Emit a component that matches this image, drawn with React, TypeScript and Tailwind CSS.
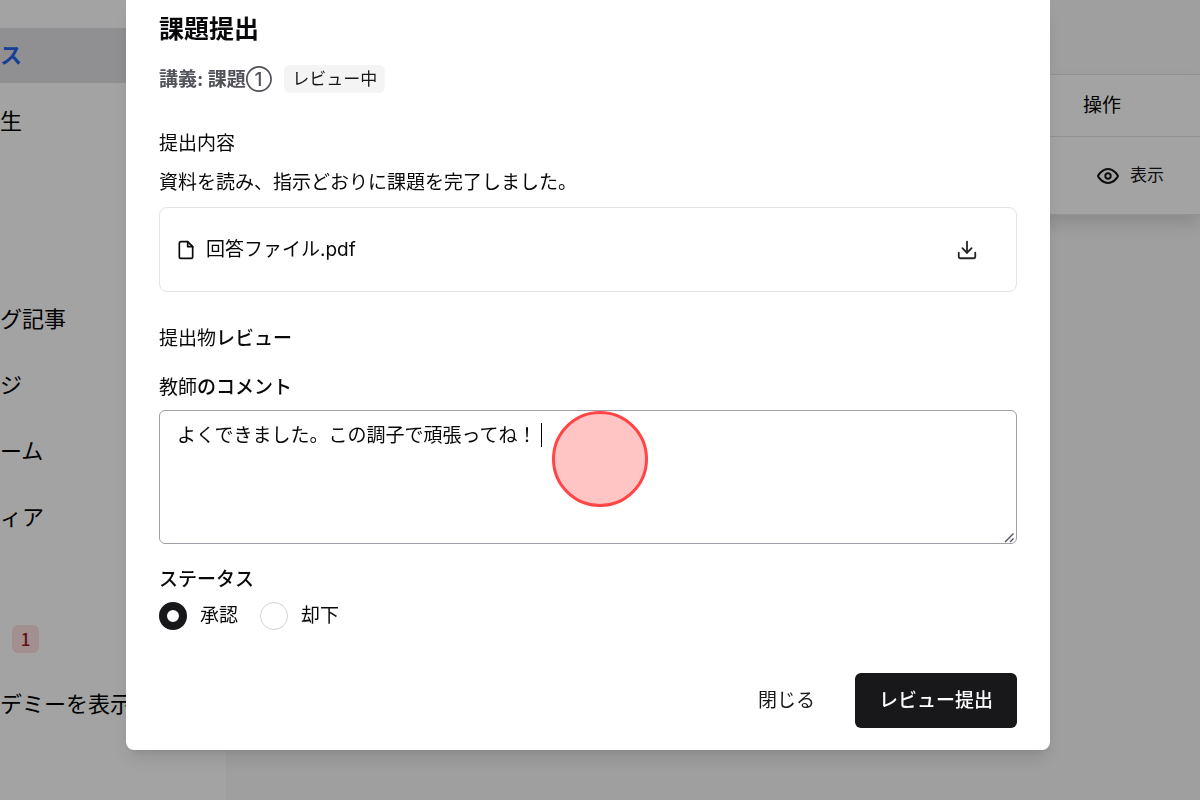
import { useState } from "react";
import { Download } from "lucide-react";

type NavItem = { label?: string; active?: boolean; badge?: string };

const mainNav: NavItem[] = [
  { label: "ス", active: true },
  { label: "生" },
  {},
  {},
  { label: "グ記事" },
  { label: "ジ" },
  { label: "ーム" },
  { label: "ィア" },
];

const academyNav: NavItem[] = [{ badge: "1" }, { label: "デミーを表示" }, {}];

const statuses = [
  { value: "approved", label: "承認" },
  { value: "rejected", label: "却下" },
];

function EyeIcon() {
  return (
    <svg width="24" height="24" viewBox="0 0 24 24" fill="none" stroke="currentColor" strokeWidth="2" strokeLinejoin="round">
      <path d="M2 12s3.5-7 10-7 10 7 10 7-3.5 7-10 7S2 12 2 12Z" />
      <circle cx="12" cy="12" r="2.7" />
    </svg>
  );
}

function FileIcon() {
  return (
    <svg width="20" height="20" viewBox="0 0 24 24" fill="none" stroke="currentColor" strokeWidth="2" strokeLinecap="round" strokeLinejoin="round">
      <path d="M14 2H6a2 2 0 0 0-2 2v16a2 2 0 0 0 2 2h12a2 2 0 0 0 2-2V8Z" />
      <path d="M14 2v6h6" />
    </svg>
  );
}

function NavList({ items }: { items: NavItem[] }) {
  return (
    <ul className="flex flex-col gap-[11px]">
      {items.map((item, i) => (
        <li key={i} className={`h-[55px] ${item.active ? "bg-[#e1e1e6]" : ""}`}>
          {(item.label || item.badge) && (
            <a
              href="#"
              className={`flex h-full items-center whitespace-nowrap text-[22px] ${
                item.active ? "font-bold text-[#2563eb]" : "text-black"
              }`}
            >
              {item.label}
              {item.badge && (
                <span className="ml-3 flex h-7 min-w-[27px] items-center justify-center rounded-md bg-[#fee2e2] font-['Noto_Sans_CJK_JP',sans-serif] text-[17px] font-medium text-[#991b1b]">
                  {item.badge}
                </span>
              )}
            </a>
          )}
        </li>
      ))}
    </ul>
  );
}

function ReviewDialog() {
  const [comment, setComment] = useState("よくできました。この調子で頑張ってね！");
  const [status, setStatus] = useState("approved");

  return (
    <div
      role="dialog"
      aria-modal="true"
      aria-labelledby="dialog-title"
      className="w-full max-w-[924px] rounded-b-lg bg-white px-[33px] pt-[14px] pb-[22px] text-[19px] leading-7 text-[#09090b] shadow-[0_12px_20px_-3px_rgba(0,0,0,0.1),0_5px_8px_-4px_rgba(0,0,0,0.1)]"
    >
      <h2 id="dialog-title" className="text-[25px] leading-[30px] font-bold">
        課題提出
      </h2>
      <div className="mt-5 flex items-center gap-3">
        <p className="pt-0.5 font-bold text-[#52525b]">
          講義: 課題<span className="font-medium">①</span>
        </p>
        <span className="rounded-md bg-[#f4f4f5] px-2 text-[17px] text-[#18181b]">レビュー中</span>
      </div>

      <section className="mt-9">
        <h3>提出内容</h3>
        <p className="mt-[11px]">資料を読み、指示どおりに課題を完了しました。</p>
        <div className="mt-[10px] flex h-[85px] items-center justify-between rounded-lg border border-[#e4e4e7] pr-[38px] pl-4">
          <div className="flex items-center gap-[10px]">
            <FileIcon />
            <span>回答ファイル.pdf</span>
          </div>
          <button type="button" aria-label="ダウンロード" className="text-[#27272a]">
            <Download size={22} />
          </button>
        </div>
      </section>

      <section className="mt-[33px]">
        <h3>
          提出物<span className="font-medium">レビュー</span>
        </h3>
        <label htmlFor="comment" className="mt-[21px] block">
          教師<span className="font-medium">のコメント</span>
        </label>
        <div className="relative mt-2">
          <textarea
            id="comment"
            value={comment}
            onChange={(e) => setComment(e.target.value)}
            className="block h-[134px] w-full resize-y rounded-md border border-[#9f9fa9] px-[17px] py-[11px] outline-none [&::-webkit-resizer]:bg-transparent"
          />
          <svg
            className="pointer-events-none absolute right-0.5 bottom-px size-3"
            viewBox="0 0 12 12"
            fill="none"
            stroke="#52525b"
            strokeWidth="1.4"
          >
            <path d="M2 11L10.500 2.500M7 11L10.500 7.500" />
          </svg>
          <span className="absolute top-[13px] left-[382px] h-6 w-px bg-black" />
          <span className="absolute top-px left-[393px] size-24 rounded-full border-[3px] border-[#ff4545] bg-[#ffc5c5]" />
        </div>
        <fieldset className="mt-[22px]">
          <legend className="font-medium">ステータス</legend>
          <div className="mt-2 flex gap-[22px]">
            {statuses.map((s) => (
              <label key={s.value} className="flex items-center gap-[13px]">
                <input
                  type="radio"
                  name="status"
                  value={s.value}
                  checked={status === s.value}
                  onChange={() => setStatus(s.value)}
                  className="size-7 appearance-none rounded-full border border-[#d4d4d8] checked:border-8 checked:border-[#18181b]"
                />
                {s.label}
              </label>
            ))}
          </div>
        </fieldset>
      </section>

      <div className="mt-[43px] flex justify-end gap-4">
        <button type="button" className="h-[55px] rounded-md px-6 text-[#18181b]">
          閉じる
        </button>
        <button type="submit" className="h-[55px] rounded-md bg-[#18181b] px-6 font-medium text-white">
          レビュー提出
        </button>
      </div>
    </div>
  );
}

export default function App() {
  return (
    <div className="flex min-h-screen overflow-hidden bg-[#f9f9f9] font-[Inter,'Noto_Sans_CJK_JP',sans-serif]">
      <nav className="w-[226px] shrink-0 bg-white pt-7">
        <NavList items={mainNav} />
        <div className="mt-[66px]">
          <NavList items={academyNav} />
        </div>
      </nav>

      <main className="flex-1 pt-[74px]">
        <table className="w-full border-y border-[#e4e4e7] bg-white text-left shadow-[0_10px_16px_rgba(0,0,0,0.12)]">
          <thead>
            <tr className="h-[62px] border-b border-[#e4e4e7]">
              <td />
              <th className="w-[150px] pt-0.5 pl-[33px] text-[19px] font-normal">操作</th>
            </tr>
          </thead>
          <tbody>
            <tr className="h-[78px]">
              <td />
              <td className="pl-[33px]">
                <button type="button" className="flex items-center gap-[10px] px-[13px] text-[17px] text-[#18181b]">
                  <EyeIcon />
                  表示
                </button>
              </td>
            </tr>
          </tbody>
        </table>
      </main>

      <div className="fixed inset-0 flex items-start justify-center bg-black/36 pr-6">
        <ReviewDialog />
      </div>
    </div>
  );
}
